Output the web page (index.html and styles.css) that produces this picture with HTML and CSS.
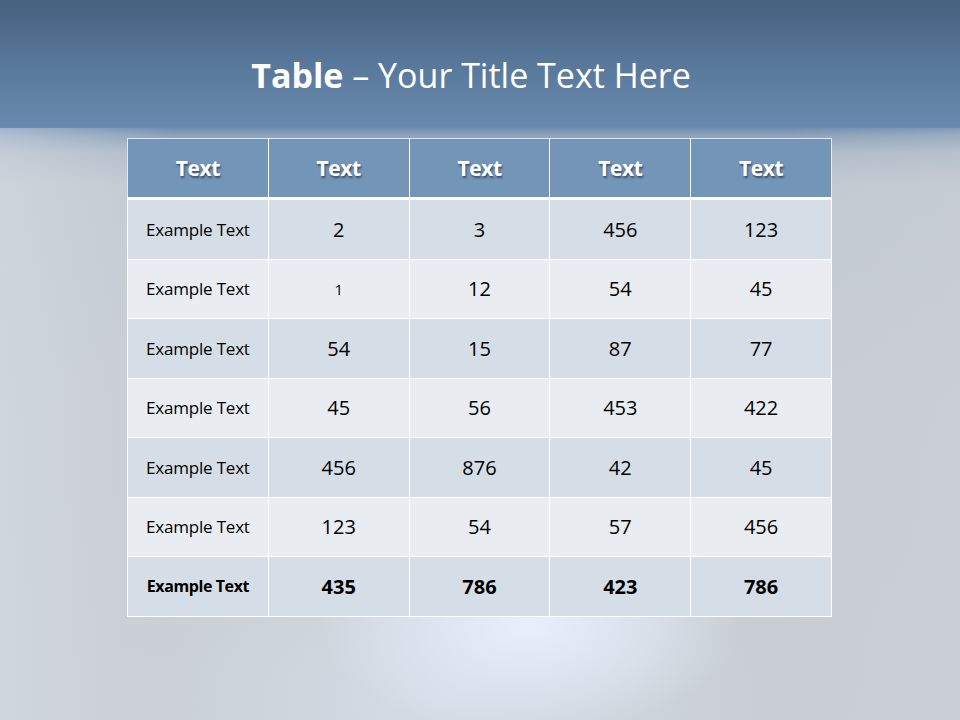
FILE: index.html
```html
<!DOCTYPE html>
<html>
<head>
<meta charset="utf-8">
<link rel="stylesheet" href="styles.css">
</head>
<body>
<div class="slide">
  <header class="band">
    <h1 class="title"><b>Table</b> – Your Title Text Here</h1>
  </header>
  <div class="glow"></div>
  <main class="content">
    <table class="grid">
      <thead>
        <tr><th>Text</th><th>Text</th><th>Text</th><th>Text</th><th>Text</th></tr>
      </thead>
      <tbody>
        <tr class="dark"><td class="label">Example Text</td><td>2</td><td>3</td><td>456</td><td>123</td></tr>
        <tr class="light"><td class="label">Example Text</td><td class="small">1</td><td>12</td><td>54</td><td>45</td></tr>
        <tr class="dark"><td class="label">Example Text</td><td>54</td><td>15</td><td>87</td><td>77</td></tr>
        <tr class="light"><td class="label">Example Text</td><td>45</td><td>56</td><td>453</td><td>422</td></tr>
        <tr class="dark"><td class="label">Example Text</td><td>456</td><td>876</td><td>42</td><td>45</td></tr>
        <tr class="light"><td class="label">Example Text</td><td>123</td><td>54</td><td>57</td><td>456</td></tr>
        <tr class="dark total"><td class="label">Example Text</td><td>435</td><td>786</td><td>423</td><td>786</td></tr>
      </tbody>
    </table>
  </main>
</div>
</body>
</html>
```
FILE: styles.css
```css
html, body {
  margin: 0;
  padding: 0;
}
body {
  width: 960px;
  height: 720px;
  overflow: hidden;
  font-family: "Open Sans", "Liberation Sans", sans-serif;
}
.slide {
  position: relative;
  width: 960px;
  height: 720px;
  background:
    linear-gradient(to bottom, #47607e 0px, #5a7a9d 70px, #6888ad 126px, #8fa3bb 136px, #b0bbc8 152px, #c3c9d1 185px, #c8cdd3 400px, #c9ced4 720px);
  overflow: hidden;
}
.slide::before {
  content: "";
  position: absolute;
  left: 0; right: 0; top: 128px; bottom: 0;
  background: linear-gradient(to right, rgba(215,222,230,0.5) 0%, rgba(215,222,230,0) 18%, rgba(215,222,230,0) 82%, rgba(210,214,220,0.2) 100%);
}
.glow {
  position: absolute;
  left: 0;
  top: 400px;
  width: 960px;
  height: 320px;
  background:
    radial-gradient(ellipse 210px 110px at 530px 225px, rgba(232,241,252,0.95) 0%, rgba(226,235,247,0.7) 45%, rgba(215,224,236,0) 100%),
    radial-gradient(ellipse 330px 200px at 440px 300px, rgba(218,226,238,0.7) 0%, rgba(215,222,232,0) 100%);
}
.band {
  position: relative;
  height: 138px;
  display: flex;
  justify-content: center;
}
.title {
  margin: 52px 18px 0 0;
  font-size: 34px;
  font-weight: 400;
  color: #ffffff;
  letter-spacing: 0;
  line-height: 46px;
  height: 46px;
}
.title b {
  font-weight: 700;
}
.content {
  position: relative;
  display: flex;
  justify-content: center;
}
.grid {
  border-collapse: collapse;
  width: 705px;
  margin-left: -1px;
  table-layout: fixed;
}
.grid th, .grid td {
  border: 1px solid #ffffff;
  text-align: center;
  vertical-align: middle;
  padding: 0;
  color: #000;
}
.grid th {
  height: 58px;
  background: #7395b8;
  color: #ffffff;
  font-size: 21px;
  font-weight: 700;
  letter-spacing: -0.4px;
  text-shadow: 1px 2px 2px rgba(40,50,70,0.7);
  border-bottom: 3px solid #ffffff;
  border-top-color: #dfe7f0;
}
.grid thead th:first-child { border-left-color: #e3eaf2; }
.grid thead th:last-child { border-right-color: #e3eaf2; }
.grid td {
  height: 58.5px;
  font-size: 20px;
  letter-spacing: 0;
}
.grid td.label {
  font-size: 17px;
  letter-spacing: -0.2px;
}
.grid td.small {
  font-size: 15px;
}
.grid tr.dark td {
  background: #d5dde6;
}
.grid tr.light td {
  background: #e9edf2;
}
.grid tr.total td {
  font-weight: 700;
}
.grid tr.total td.label {
  font-size: 16px;
  letter-spacing: -0.4px;
}
```
